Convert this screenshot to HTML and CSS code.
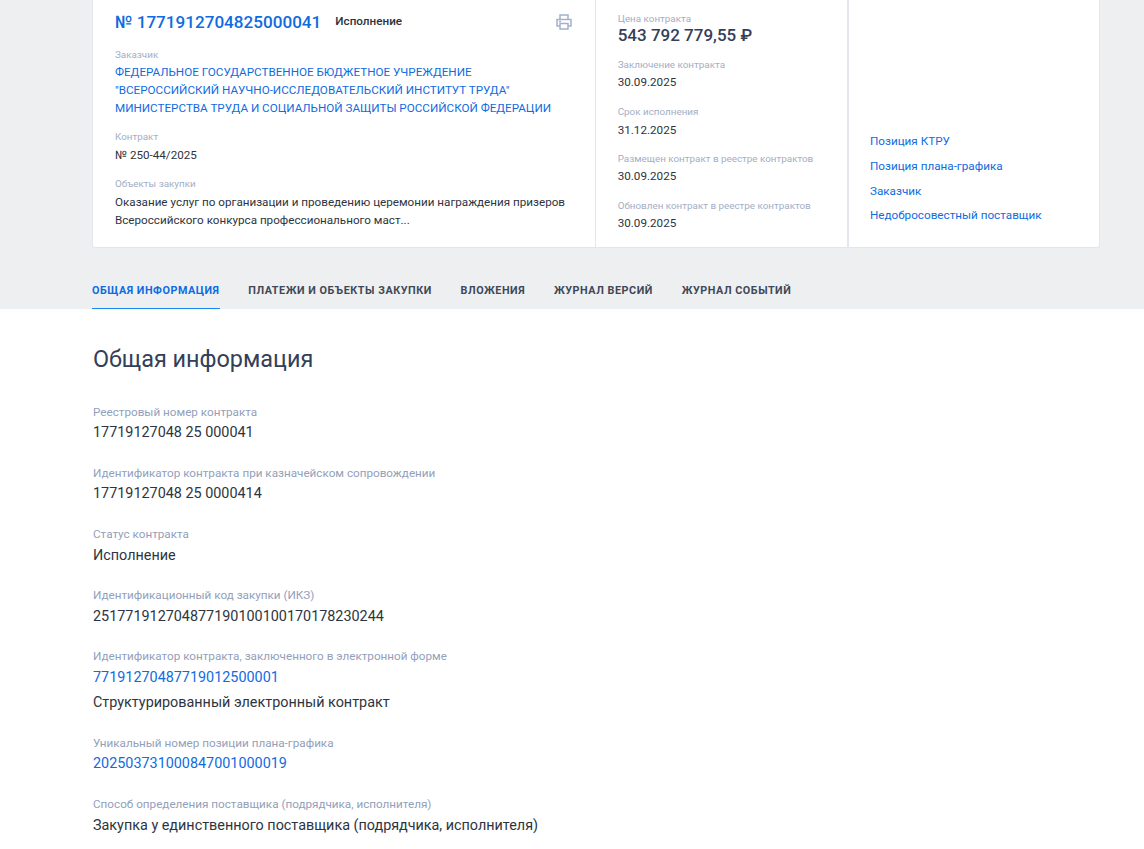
FILE: index.html
```html
<!DOCTYPE html>
<html lang="ru">
<head>
<meta charset="utf-8">
<title>Контракт</title>
<link rel="stylesheet" href="styles.css">
</head>
<body>
<div class="band">
  <div class="card">
    <div class="col-main">
      <div class="head">
        <a class="num">№ 1771912704825000041</a>
        <span class="status">Исполнение</span>
        <svg class="print" width="16" height="16" viewBox="0 0 16 16" fill="none" stroke="#a3b1cc" stroke-width="1.5"><path d="M4 5V1h8v4"/><path d="M4 12H1V5.5h14V12h-3"/><path d="M4 9.5h8V15H4z"/><path d="M3 7.5h2"/></svg>
      </div>
      <div class="label l-cust">Заказчик</div>
      <a class="cust">ФЕДЕРАЛЬНОЕ ГОСУДАРСТВЕННОЕ БЮДЖЕТНОЕ УЧРЕЖДЕНИЕ<br>"ВСЕРОССИЙСКИЙ НАУЧНО-ИССЛЕДОВАТЕЛЬСКИЙ ИНСТИТУТ ТРУДА"<br>МИНИСТЕРСТВА ТРУДА И СОЦИАЛЬНОЙ ЗАЩИТЫ РОССИЙСКОЙ ФЕДЕРАЦИИ</a>
      <div class="label l-contract">Контракт</div>
      <div class="val">№ 250-44/2025</div>
      <div class="label l-next">Объекты закупки</div>
      <div class="val">Оказание услуг по организации и проведению церемонии награждения призеров<br>Всероссийского конкурса профессионального маст...</div>
    </div>
    <div class="col-dates">
      <div class="label">Цена контракта</div>
      <div class="price">543 792 779,55 ₽</div>
      <div class="label l-date">Заключение контракта</div>
      <div class="val">30.09.2025</div>
      <div class="label l-date">Срок исполнения</div>
      <div class="val val-low">31.12.2025</div>
      <div class="label l-date l-close">Размещен контракт в реестре контрактов</div>
      <div class="val">30.09.2025</div>
      <div class="label l-date">Обновлен контракт в реестре контрактов</div>
      <div class="val">30.09.2025</div>
    </div>
    <div class="col-links">
      <a>Позиция КТРУ</a>
      <a>Позиция плана-графика</a>
      <a>Заказчик</a>
      <a>Недобросовестный поставщик</a>
    </div>
  </div>
  <nav class="tabs">
    <a class="tab active">ОБЩАЯ ИНФОРМАЦИЯ</a>
    <a class="tab">ПЛАТЕЖИ И ОБЪЕКТЫ ЗАКУПКИ</a>
    <a class="tab">ВЛОЖЕНИЯ</a>
    <a class="tab">ЖУРНАЛ ВЕРСИЙ</a>
    <a class="tab">ЖУРНАЛ СОБЫТИЙ</a>
  </nav>
</div>
<main class="content">
  <h1>Общая информация</h1>
  <div class="field"><div class="f-label">Реестровый номер контракта</div><div class="f-val">17719127048 25 000041</div></div>
  <div class="field"><div class="f-label">Идентификатор контракта при казначейском сопровождении</div><div class="f-val">17719127048 25 0000414</div></div>
  <div class="field"><div class="f-label">Статус контракта</div><div class="f-val">Исполнение</div></div>
  <div class="field"><div class="f-label">Идентификационный код закупки (ИКЗ)</div><div class="f-val">251771912704877190100100170178230244</div></div>
  <div class="field"><div class="f-label">Идентификатор контракта, заключенного в электронной форме</div><div class="f-val link">77191270487719012500001</div><div class="f-val second">Структурированный электронный контракт</div></div>
  <div class="field"><div class="f-label">Уникальный номер позиции плана-графика</div><div class="f-val link">202503731000847001000019</div></div>
  <div class="field"><div class="f-label">Способ определения поставщика (подрядчика, исполнителя)</div><div class="f-val">Закупка у единственного поставщика (подрядчика, исполнителя)</div></div>
</main>
</body>
</html>
```
FILE: styles.css
```css
* { box-sizing: border-box; }
html, body { margin: 0; padding: 0; overflow: hidden; }
body { height: 849px; background: #fff; font-family: Roboto, "Liberation Sans", sans-serif; color: #2d3440; }
a { color: #0f6be0; text-decoration: none; }
.band { background: #eeeff1; height: 309px; padding: 0 44px 0 92px; }
.card { display: flex; height: 248px; background: #fff; border: 1px solid #e3e6ed; border-top: 0; border-radius: 0 0 3px 3px; }
.col-main { width: 503px; padding: 12px 22px 0 22px; border-right: 1px solid #e3e6f0; }
.col-dates { width: 253px; padding: 12px 0 0 21.7px; border-right: 2px solid #e3e6f0; }
.col-links { flex: 1; display: flex; flex-direction: column; justify-content: flex-end; gap: 7px; padding: 0 0 22px 21px; }
.col-links a { font-size: 11.7px; line-height: 17.7px; }
.head { display: flex; align-items: center; height: 21px; }
.num { font-size: 17.1px; font-weight: 500; line-height: 21px; }
.status { margin-left: 14px; margin-top: -3px; font-size: 11.7px; font-weight: 500; color: #2a3240; }
.print { margin-left: auto; margin-right: 1px; margin-top: -1px; }
.label { font-size: 9.85px; line-height: 13px; color: #a3aec4; }
.l-cust { margin-top: 15px; }
.l-contract { margin-top: 13px; }
.l-next { margin-top: 13px; }
.l-date { margin-top: 14px; }
.l-close { margin-top: 13px; }
.cust { display: block; margin-top: 2px; font-size: 11.67px; line-height: 18px; }
.val { margin-top: 2px; font-size: 11.67px; line-height: 18px; color: #2d3440; }
.col-main .val { margin-top: 3px; }
.val-low { margin-top: 3px; }
.price { margin-bottom: -2px; font-size: 17px; font-weight: 500; line-height: 21px; color: #334059; }
.tabs { display: flex; gap: 28.8px; margin-top: 26px; height: 35px; }
.tab { height: 35px; padding-top: 10px; font-size: 10.8px; line-height: 13px; font-weight: 700; letter-spacing: 0.53px; color: #3e4856; }
.tab.active { color: #0f6be0; border-bottom: 1px solid #1a84f0; }
.content { padding: 36px 0 0 93px; }
h1 { margin: 0 0 31px; font-size: 23.4px; font-weight: 400; line-height: 28px; color: #334059; }
.field { margin-bottom: 19.71px; }
.f-label { font-size: 11.7px; line-height: 16px; color: #93a0bb; }
.f-val { margin-top: 1.39px; font-size: 14.38px; line-height: 24px; color: #2d3440; }
.f-val.link { color: #0f6be0; }
.f-val.second { margin-top: 1.7px; }
```
